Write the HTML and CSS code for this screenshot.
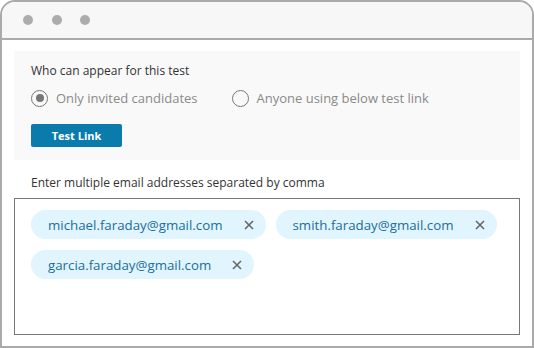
FILE: index.html
```html
<!DOCTYPE html>
<html>
<head>
<meta charset="utf-8">
<link rel="stylesheet" href="styles.css">
</head>
<body>
<div class="window">
  <div class="titlebar">
    <span class="dot"></span><span class="dot"></span><span class="dot"></span>
  </div>
  <div class="content">
    <div class="panel">
      <div class="label">Who can appear for this test</div>
      <div class="radios">
        <label class="radio"><span class="circle checked"></span><span class="radio-text">Only invited candidates</span></label>
        <label class="radio"><span class="circle"></span><span class="radio-text">Anyone using below test link</span></label>
      </div>
      <button class="btn">Test Link</button>
    </div>
    <div class="label email-label">Enter multiple email addresses separated by comma</div>
    <div class="emailbox">
      <span class="chip"><span class="chip-text">michael.faraday@gmail.com</span><svg class="x" width="10" height="10" viewBox="0 0 10 10"><path d="M1 1L9 9M9 1L1 9" stroke="#666666" stroke-width="1.6" fill="none"/></svg></span>
      <span class="chip"><span class="chip-text">smith.faraday@gmail.com</span><svg class="x" width="10" height="10" viewBox="0 0 10 10"><path d="M1 1L9 9M9 1L1 9" stroke="#666666" stroke-width="1.6" fill="none"/></svg></span>
      <span class="chip"><span class="chip-text">garcia.faraday@gmail.com</span><svg class="x" width="10" height="10" viewBox="0 0 10 10"><path d="M1 1L9 9M9 1L1 9" stroke="#666666" stroke-width="1.6" fill="none"/></svg></span>
    </div>
  </div>
</div>
</body>
</html>
```
FILE: styles.css
```css
* { box-sizing: border-box; }
html, body { margin: 0; padding: 0; background: #ffffff; }
body { font-family: "Open Sans", "Liberation Sans", sans-serif; }
.window {
  width: 534px;
  height: 348px;
  border: 2px solid #aaaaaa;
  border-radius: 15px 15px 0 0;
  overflow: hidden;
  background: #ffffff;
}
.titlebar {
  height: 38px;
  background: #f7f7f7;
  border-bottom: 2px solid #aaaaaa;
  display: flex;
  align-items: center;
  gap: 18.5px;
  padding-left: 21px;
  padding-bottom: 1px;
}
.dot {
  width: 10px;
  height: 10px;
  border-radius: 50%;
  background: #acacac;
}
.content {
  padding: 11px 12px 0 12px;
}
.panel {
  background: #f9f9f9;
  height: 109px;
  padding: 13px 17px 0 17px;
}
.label {
  font-size: 12px;
  color: #333333;
  line-height: 14px;
}
.radios {
  display: flex;
  margin-top: 11px;
  height: 18px;
  align-items: center;
}
.radio {
  display: flex;
  align-items: center;
  gap: 8px;
  margin-right: 34px;
}
.circle {
  width: 17px;
  height: 17px;
  border: 1.5px solid #777777;
  border-radius: 50%;
  display: flex;
  align-items: center;
  justify-content: center;
}
.circle.checked::after {
  content: "";
  width: 8px;
  height: 8px;
  border-radius: 50%;
  background: #777777;
}
.radio-text {
  font-size: 13px;
  color: #8a8a8a;
}
.btn {
  display: block;
  margin-top: 17px;
  width: 91px;
  height: 23px;
  border: none;
  border-radius: 2px;
  background: #0a7bab;
  color: #ffffff;
  font-family: "Open Sans", "Liberation Sans", sans-serif;
  font-weight: 700;
  font-size: 11px;
  padding: 0;
}
.email-label {
  margin-top: 16px;
  padding-left: 17px;
}
.emailbox {
  margin-top: 8px;
  height: 137px;
  border: 1px solid #777777;
  padding: 11px 16px;
  display: flex;
  flex-wrap: wrap;
  align-content: flex-start;
  gap: 11px 10px;
}
.chip {
  height: 29px;
  border-radius: 15px;
  background: #e0f5fd;
  display: inline-flex;
  align-items: center;
  padding: 0 12px 0 17px;
}
.chip-text {
  font-size: 13.3px;
  color: #1c6e9c;
}
.x {
  margin-left: 21px;
}
```
